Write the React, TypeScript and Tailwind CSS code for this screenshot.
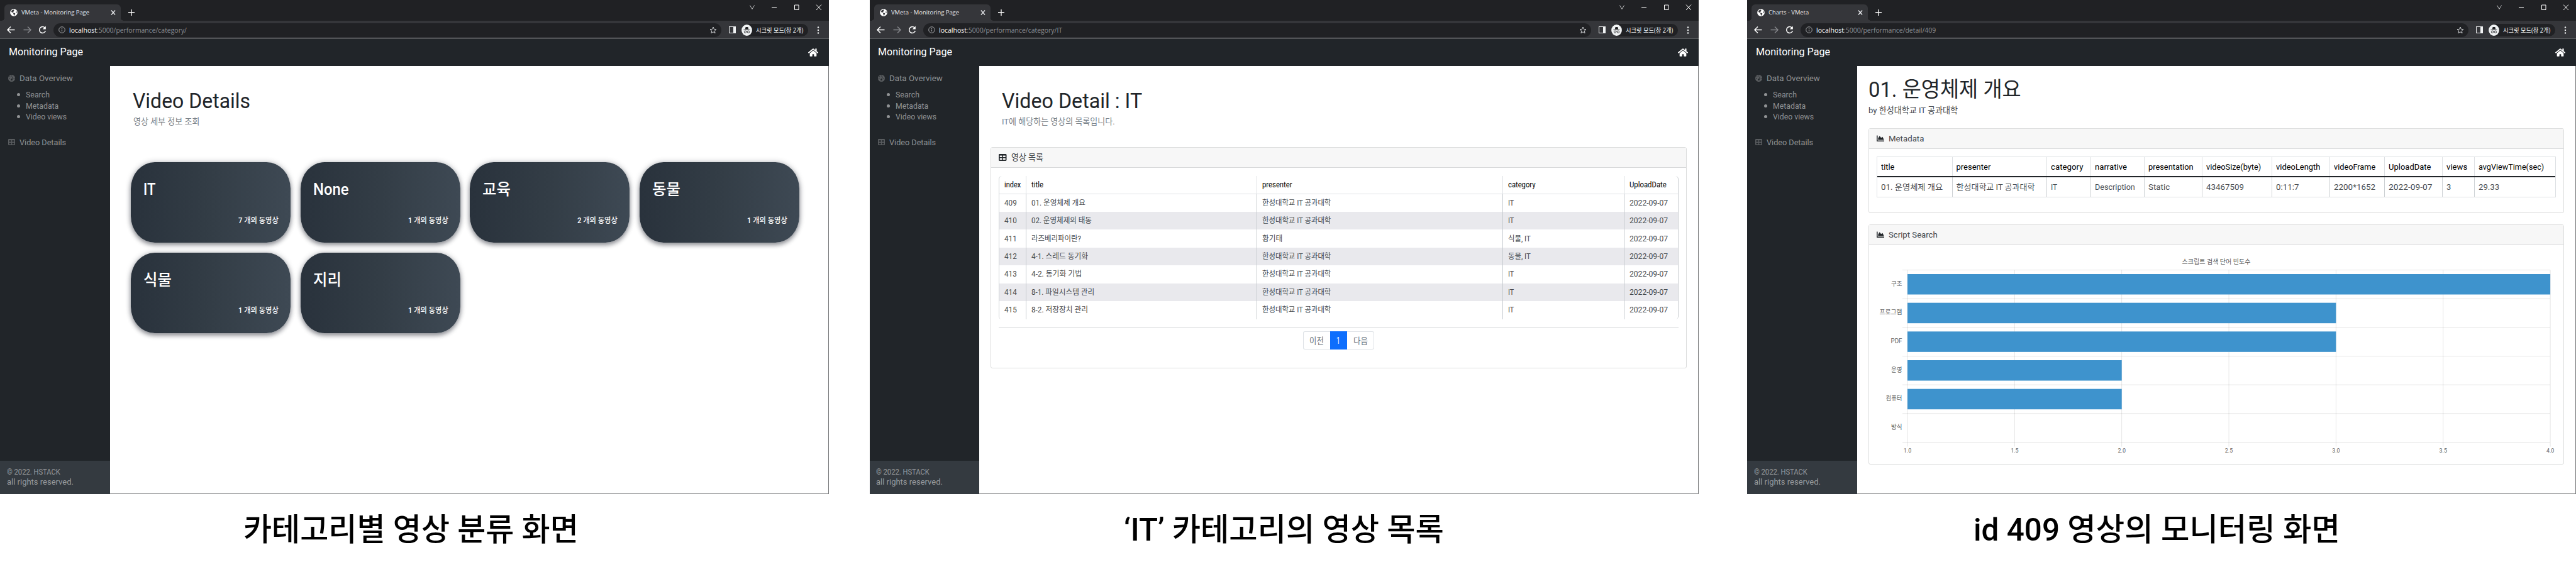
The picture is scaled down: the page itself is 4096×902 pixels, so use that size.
import { useLayoutEffect, useRef, useState } from "react";
import type { ReactNode } from "react";
import { FaChartArea, FaGlobeAmericas, FaHome } from "react-icons/fa";

const FONT = "font-['Roboto','Noto_Sans_CJK_KR',sans-serif]";
const UI_FONT = "font-['Open_Sans','Noto_Sans_CJK_KR',sans-serif]";

/* Condensed label: the text is squeezed or stretched to exactly `w` pixels. */
function Fit({ w, className = "", children }: { w: number; className?: string; children: ReactNode }) {
  const ref = useRef<HTMLSpanElement>(null);
  const [scale, setScale] = useState(1);
  useLayoutEffect(() => {
    if (ref.current) setScale(w / ref.current.offsetWidth);
  }, [w]);
  return (
    <span className={`inline-flex shrink-0 justify-start leading-none ${className}`} style={{ width: w }}>
      <span ref={ref} className="shrink-0 origin-left whitespace-nowrap" style={{ transform: `scaleX(${scale})` }}>
        {children}
      </span>
    </span>
  );
}

function TableIcon({ className }: { className: string }) {
  return (
    <svg viewBox="0 0 16 14" preserveAspectRatio="none" className={className}>
      <path
        fill="currentColor"
        fillRule="evenodd"
        d="M1.8 0h12.4A1.8 1.8 0 0 1 16 1.8v10.4a1.8 1.8 0 0 1-1.8 1.8H1.8A1.8 1.8 0 0 1 0 12.2V1.8A1.8 1.8 0 0 1 1.8 0zM2.2 3.2v3.2h4.8v-3.2zM9 3.2v3.2h4.8v-3.2zM2.2 8.4v3.4h4.8V8.4zM9 8.4v3.4h4.8V8.4z"
      />
    </svg>
  );
}

function GaugeIcon({ className }: { className: string }) {
  return (
    <svg viewBox="0 0 16 16" className={className}>
      <circle cx="8" cy="8" r="8" fill="currentColor" />
      <g fill="#212529">
        <circle cx="8" cy="2.8" r="1" />
        <circle cx="3.9" cy="4.4" r="1" />
        <circle cx="2.6" cy="8.4" r="1" />
        <circle cx="13.400" cy="8.4" r="1" />
        <circle cx="8" cy="11.2" r="2" />
      </g>
      <path d="M8 11.200 11 4" stroke="#212529" strokeWidth="1.300" />
    </svg>
  );
}

function Incognito() {
  return (
    <svg viewBox="0 0 17 18" className="h-[18px] w-[17px] shrink-0">
      <ellipse cx="8.5" cy="9" rx="8.4" ry="9" fill="#f1f3f4" />
      <path d="M5.8 7.5 6.6 4h3.8l.8 3.5z" fill="#202124" />
      <path d="M3.4 8.6h10.2" stroke="#202124" strokeWidth="0.9" />
      <g fill="none" stroke="#202124" strokeWidth="0.8">
        <circle cx="6" cy="11.7" r="1.7" />
        <circle cx="11" cy="11.7" r="1.7" />
        <path d="M7.7 11.400q.8-.5 1.600 0" />
      </g>
    </svg>
  );
}

function Browser({ title, titleW, path, pathW }: { title: string; titleW: number; path: string; pathW: number }) {
  return (
    <div className={UI_FONT}>
      <div className="flex h-[33px] justify-between bg-[#202124] text-white">
        <div className="flex items-end pl-[2px]">
          <span className="size-[5px] bg-[radial-gradient(circle_at_0_0,transparent_5px,#35363a_5px)]" />
          <div className="flex h-[26px] w-[185px] items-center rounded-t-[6px] bg-[#35363a] pl-[9px] text-[#e8eaed]">
            <FaGlobeAmericas className="size-[12px] text-white" />
            <Fit w={titleW} className="ml-[6px] text-[9.500px]">{title}</Fit>
            <svg viewBox="0 0 8 8" className="mr-[8px] ml-auto size-[8px]" stroke="#e8eaed" strokeWidth="1.3">
              <path d="M.9.5 7.1 7.5M7.1.5.9 7.5" />
            </svg>
          </div>
          <span className="size-[5px] bg-[radial-gradient(circle_at_100%_0,transparent_5px,#35363a_5px)]" />
          <svg viewBox="0 0 10 10" className="mb-[8px] ml-[7px] size-[10px]" stroke="#fff" strokeWidth="1.3">
            <path d="M5 0v10M0 5h10" />
          </svg>
        </div>
        <svg viewBox="0 0 125 24" className="mr-[2px] h-[24px] w-[125px]" fill="none" stroke="#fff">
          <path d="m1.500 8.500 3.500 6 3.500-6" strokeWidth="0.9" stroke="#cfd0d2" />
          <path d="M36 11.800h8" />
          <path d="M72.500 8h6.500v7.500h-6.500z" />
          <path d="m107 7.500 8 8.500M115 7.500l-8 8.500" />
        </svg>
      </div>
      <div className="flex h-[29px] items-center border-b border-[#5c5e61] bg-[#35363a] pt-px">
        <svg viewBox="0 0 76 16" className="ml-[8px] h-[16px] w-[76px]" fill="none" stroke="#fff" strokeWidth="1.5">
          <path d="M15.500 7.500H4.500M9 2.500l-5 5 5 5" />
          <path d="M29.500 7.500h11M36 2.500l5 5-5 5" stroke="#85868a" />
          <path d="M63.300 4.300A4.900 5 0 1 0 64.300 9" />
          <path d="M64.800 1.600v4.900h-5z" fill="#fff" stroke="none" />
        </svg>
        <div className="ml-[1px] flex h-[22px] w-[1062px] items-center rounded-full bg-[#202124] pl-[8px]">
          <svg viewBox="0 0 11 11" className="size-[11px]" fill="none" stroke="#a7a9ac" strokeWidth="1">
            <circle cx="5.500" cy="5.500" r="4.800" />
            <path d="M5.500 4.900v3.200M5.500 2.700v1.200" strokeWidth="1.200" />
          </svg>
          <Fit w={44} className="ml-[6px] text-[11px] text-white">localhost</Fit>
          <Fit w={pathW} className="text-[11px] text-[#8d9094]">{path}</Fit>
          <svg viewBox="0 0 12 12" className="mr-[7px] ml-auto size-[12px]" fill="none" stroke="#d0d2d5" strokeWidth="1">
            <path d="m6 1 1.400 3.400 3.600.3-2.700 2.400.8 3.600L6 8.800l-3.100 1.900.8-3.600L1 4.700l3.600-.3z" />
          </svg>
        </div>
        <div className="ml-[12px] h-[11px] w-[11px] border-[1.500px] border-r-[4px] border-[#f1f3f4]" />
        <div className="ml-[9px] flex h-[20px] w-[106px] items-center rounded-full bg-[#202124]">
          <Incognito />
          <Fit w={75} className="ml-[6px] text-[10px] text-[#f1f3f4]">시크릿 모드(창 2개)</Fit>
        </div>
        <svg viewBox="0 0 4 14" className="ml-[14px] h-[14px] w-[4px]" fill="#f1f3f4">
          <circle cx="2" cy="2.500" r="1.200" />
          <circle cx="2" cy="7" r="1.200" />
          <circle cx="2" cy="11.500" r="1.200" />
        </svg>
      </div>
    </div>
  );
}

const bullets = [
  { t: "Search", w: 38 },
  { t: "Metadata", w: 52 },
  { t: "Video views", w: 65 },
];

function Sidebar() {
  return (
    <aside className="flex w-[174.500px] shrink-0 flex-col bg-[#212529] text-[#909294]">
      <div className="mt-[10px] flex h-[18px] items-center pl-[13px]">
        <GaugeIcon className="size-[11px] text-[#595c5f]" />
        <Fit w={85} className="ml-[7px] text-[13px]">Data Overview</Fit>
      </div>
      <ul className="mt-[9px]">
        {bullets.map((b) => (
          <li key={b.t} className="flex h-[17.500px] items-center pl-[27px]">
            <span className="size-[5px] rounded-full bg-[#909294]" />
            <Fit w={b.w} className="ml-[9px] text-[13px]">{b.t}</Fit>
          </li>
        ))}
      </ul>
      <div className="mt-[22.500px] flex h-[18px] items-center pl-[13px]">
        <TableIcon className="h-[10px] w-[11px] text-[#595c5f]" />
        <Fit w={74} className="ml-[7px] text-[13px]">Video Details</Fit>
      </div>
      <div className="mt-auto flex h-[53px] flex-col gap-[4px] bg-[#343a40] pt-[11.500px] pl-[10.500px] text-[#989b9e]">
        <Fit w={85} className="text-[12.500px]">© 2022. HSTACK</Fit>
        <Fit w={106} className="text-[12.500px]">all rights reserved.</Fit>
      </div>
    </aside>
  );
}

type WindowProps = { title: string; titleW: number; path: string; pathW: number; children: ReactNode };

function Window({ children, ...tab }: WindowProps) {
  return (
    <section className="flex h-[786px] w-[1318px] shrink-0 flex-col bg-white">
      <Browser {...tab} />
      <header className="flex h-[43px] items-center justify-between bg-[#212529] pr-[17px] pl-[13.500px] text-white">
        <Fit w={118} className="text-[16.500px]">Monitoring Page</Fit>
        <FaHome className="h-[15px] w-[16px]" />
      </header>
      <div className="flex grow">
        <Sidebar />
        <main className="flex grow flex-col border-r border-b border-[#77787a] pr-[18px] pl-[18px]">{children}</main>
      </div>
    </section>
  );
}

function Category({ name, nameW, count }: { name: string; nameW: number; count: number }) {
  return (
    <div className="flex h-[128px] flex-col rounded-[38px/42px] bg-linear-to-r from-[#29323c] via-[#333d46] to-[#3e4954] pr-[19px] pl-[20px] text-white shadow-[0_4px_7px_rgba(35,38,50,0.42),0_0_10px_rgba(35,38,50,0.28)]">
      <div className="mt-[29px] flex h-[30px] items-center">
        <Fit w={nameW} className="text-[25.500px] font-medium">{name}</Fit>
      </div>
      <div className="mt-[25px] flex h-[18px] items-center justify-end">
        <Fit w={64} className="text-[12.500px] font-medium">{count} 개의 동영상</Fit>
      </div>
    </div>
  );
}

const categories = [
  { name: "IT", nameW: 19, count: 7 },
  { name: "None", nameW: 56, count: 1 },
  { name: "교육", nameW: 45, count: 2 },
  { name: "동물", nameW: 45, count: 1 },
  { name: "식물", nameW: 45, count: 1 },
  { name: "지리", nameW: 45, count: 1 },
];

function CategoryPage() {
  return (
    <>
      <div className="mt-[36px] flex h-[40px] items-center pl-[18px] text-[#212529]">
        <Fit w={187} className="text-[33.500px]">Video Details</Fit>
      </div>
      <div className="mt-[4px] flex h-[18px] items-center pl-[19px] text-[#7b838a]">
        <Fit w={105} className="text-[13.500px]">영상 세부 정보 조회</Fit>
      </div>
      <div className="mt-[55px] ml-[15.500px] grid w-[1063px] grid-cols-4 gap-x-[15.600px] gap-y-[15.500px]">
        {categories.map((c) => (
          <Category key={c.name} {...c} />
        ))}
      </div>
    </>
  );
}

type Cell = [string, number];

const PRES: Cell = ["한성대학교 IT 공과대학", 109];
const rows: { id: string; title: Cell; presenter: Cell; category: Cell }[] = [
  { id: "409", title: ["01. 운영체제 개요", 86], presenter: PRES, category: ["IT", 9] },
  { id: "410", title: ["02. 운영체제의 태동", 96], presenter: PRES, category: ["IT", 9] },
  { id: "411", title: ["라즈베리파이란?", 79], presenter: ["황기태", 32], category: ["식물, IT", 36] },
  { id: "412", title: ["4-1. 스레드 동기화", 90], presenter: PRES, category: ["동물, IT", 36] },
  { id: "413", title: ["4-2. 동기화 기법", 80], presenter: PRES, category: ["IT", 9] },
  { id: "414", title: ["8-1. 파일시스템 관리", 100], presenter: PRES, category: ["IT", 9] },
  { id: "415", title: ["8-2. 저장장치 관리", 90], presenter: PRES, category: ["IT", 9] },
];

const GRID2 = "grid grid-cols-[43px_366.500px_391.500px_192.500px_86px]";
const heads2: Cell[] = [["index", 26.5], ["title", 19], ["presenter", 48], ["category", 44], ["UploadDate", 58.5]];

function ListPage() {
  return (
    <>
      <div className="mt-[36px] flex h-[40px] items-center pl-[18px] text-[#212529]">
        <Fit w={223} className="text-[33.500px]">Video Detail : IT</Fit>
      </div>
      <div className="mt-[4px] flex h-[18px] items-center pl-[18px] text-[#7b838a]">
        <Fit w={180} className="text-[13.500px]">IT에 해당하는 영상의 목록입니다.</Fit>
      </div>
      <div className="mt-[31px] flex h-[352px] flex-col rounded-[3px] border border-[#dcdddd]">
        <div className="flex h-[32px] shrink-0 items-center border-b border-[#d8d9da] bg-[#f7f7f7] pl-[12px] text-[#212529]">
          <TableIcon className="h-[11px] w-[12.500px]" />
          <Fit w={51} className="ml-[7px] text-[13.500px] text-[#3c4044]">영상 목록</Fit>
        </div>
        <div className="mt-[12.500px] ml-[12px] w-[1080.500px] overflow-hidden rounded-[5px] border-x border-[#cbcfd2] text-[12px] text-[#45494d]">
          <div className={`${GRID2} h-[29px] border-b-[1.500px] border-[#dcdfe2] text-black`}>
            {heads2.map(([t, w]) => (
              <div key={t} className="flex items-center border-r border-[#dcdfe2] pl-[8px] last:border-r-0">
                <Fit w={w}>{t}</Fit>
              </div>
            ))}
          </div>
          {rows.map((r) => (
            <div key={r.id} className={`${GRID2} h-[28.450px] even:bg-white odd:bg-[#e9e9ed]`}>
              {([[r.id, 19.5], r.title, r.presenter, r.category, ["2022-09-07", 61.5]] as Cell[]).map(([t, w], i) => (
                <div key={i} className="flex items-center border-r border-[#c4c9cd] pl-[8px] last:border-r-0">
                  <Fit w={w}>{t}</Fit>
                </div>
              ))}
            </div>
          ))}
        </div>
        <div className="mx-[12px] mt-[12px] h-px shrink-0 bg-[#d6d8da]" />
        <div className="mt-[6.500px] flex h-[29px] justify-center text-[14px] text-[#6c757d]">
          <div className="flex w-[43px] items-center justify-center rounded-l-[3px] border border-r-0 border-[#dee2e6]">
            <Fit w={23}>이전</Fit>
          </div>
          <div className="flex w-[27.500px] items-center justify-center bg-[#0d6efd] text-white">
            <Fit w={6}>1</Fit>
          </div>
          <div className="flex w-[43px] items-center justify-center rounded-r-[3px] border border-l-0 border-[#dee2e6]">
            <Fit w={23}>다음</Fit>
          </div>
        </div>
      </div>
    </>
  );
}

const meta: { head: Cell; value: Cell }[] = [
  { head: ["title", 21.5], value: ["01. 운영체제 개요", 98] },
  { head: ["presenter", 55], value: ["한성대학교 IT 공과대학", 125] },
  { head: ["category", 51], value: ["IT", 10] },
  { head: ["narrative", 50.5], value: ["Description", 64] },
  { head: ["presentation", 72], value: ["Static", 34] },
  { head: ["videoSize(byte)", 87.5], value: ["43467509", 59.5] },
  { head: ["videoLength", 70.5], value: ["0:11:7", 37] },
  { head: ["videoFrame", 66.5], value: ["2200*1652", 66] },
  { head: ["UploadDate", 67], value: ["2022-09-07", 70] },
  { head: ["views", 33.5], value: ["3", 7] },
  { head: ["avgViewTime(sec)", 104], value: ["29.33", 33.5] },
];
const GRID3 =
  "grid grid-cols-[120px_150px_70px_85px_92px_111.500px_92px_87px_92px_51px_129px]";

function PanelHead({ title, w }: { title: string; w: number }) {
  return (
    <div className="flex h-[32px] shrink-0 items-center border-b border-[#d8d9da] bg-[#f7f7f7] pl-[12px] text-[#212529]">
      <FaChartArea className="h-[12.500px] w-[12.500px]" />
      <Fit w={w} className="ml-[6.500px] text-[13.500px] text-[#45494d]">{title}</Fit>
    </div>
  );
}

const bars = [
  { t: "구조", w: 17.5, v: 4 },
  { t: "프로그램", w: 36, v: 3 },
  { t: "PDF", w: 18, v: 3 },
  { t: "운영", w: 17.5, v: 2 },
  { t: "컴퓨터", w: 26, v: 2 },
  { t: "방식", w: 17.5, v: 1 },
];
const X0 = 61;
const Y0 = 39.5;
const STEP = 45.67;
const UNIT = 340.7;

function Chart() {
  return (
    <svg viewBox="0 0 1104 348" className="h-[348px] w-[1104px] shrink-0" fill="#666">
      <g stroke="#000" strokeOpacity="0.1">
        {[0, 1, 2, 3, 4, 5, 6].map((i) => (
          <path key={i} d={`M${X0 - 8} ${Y0 + i * STEP}h${UNIT * 3 + 8}`} />
        ))}
        {[0, 1, 2, 3, 4, 5, 6].map((i) => (
          <path key={i} d={`M${X0 + (i * UNIT) / 2} ${Y0}v${STEP * 6 + 7}`} />
        ))}
      </g>
      {bars.map((b, i) => (
        <rect key={b.t} x={X0} y={Y0 + i * STEP + 6.5} width={(b.v - 1) * UNIT} height="32.5" fill="#3e93cd" />
      ))}
      {bars.map((b, i) => (
        <text key={b.t} x={X0 - 8.5 - b.w} y={Y0 + i * STEP + 25} fontSize="10" textLength={b.w} lengthAdjust="spacingAndGlyphs">
          {b.t}
        </text>
      ))}
      {["1.0", "1.5", "2.0", "2.5", "3.0", "3.5", "4.0"].map((t, i) => (
        <text key={t} x={X0 - 6.2 + (i * UNIT) / 2} y={Y0 + 290} fontSize="9.5" textLength="12.4" lengthAdjust="spacingAndGlyphs">
          {t}
        </text>
      ))}
      <text x="497.5" y="29.5" fontSize="10" textLength="109" lengthAdjust="spacingAndGlyphs" fill="#5a5a5a">
        스크립트 검색 단어 빈도수
      </text>
    </svg>
  );
}

function DetailPage() {
  return (
    <>
      <div className="mt-[17px] flex h-[40px] items-center text-[#212529]">
        <Fit w={243} className="text-[34px]">01. 운영체제 개요</Fit>
      </div>
      <div className="mt-[5px] flex h-[18px] items-center text-[#45494d]">
        <Fit w={142} className="text-[13.500px]">by 한성대학교 IT 공과대학</Fit>
      </div>
      <div className="mt-[19px] flex h-[135px] flex-col rounded-[3px] border border-[#dcdddd]">
        <PanelHead title="Metadata" w={56} />
        <div className="mt-[12px] ml-[12px] w-[1080.500px] border border-[#dde0e3] text-[13px] text-[#4c5054]">
          <div className={`${GRID3} h-[32px] border-b-2 border-[#212529] text-black`}>
            {meta.map(({ head: [t, w] }) => (
              <div key={t} className="flex items-center border-r border-[#dde0e3] pl-[6px] last:border-r-0">
                <Fit w={w}>{t}</Fit>
              </div>
            ))}
          </div>
          <div className={`${GRID3} h-[31px]`}>
            {meta.map(({ head, value: [t, w] }) => (
              <div key={head[0]} className="flex items-center border-r border-[#cdd1d4] pl-[6px] last:border-r-0">
                <Fit w={w}>{t}</Fit>
              </div>
            ))}
          </div>
        </div>
      </div>
      <div className="mt-[18px] flex h-[382px] flex-col rounded-[3px] border border-[#dcdddd]">
        <PanelHead title="Script Search" w={78} />
        <Chart />
      </div>
    </>
  );
}

export default function App() {
  return (
    <div className={`h-[902px] w-[4096px] overflow-hidden bg-white ${FONT}`}>
      <div className="flex justify-between">
        <Window title="VMeta - Monitoring Page" titleW={108} path=":5000/performance/category/" pathW={143}>
          <CategoryPage />
        </Window>
        <div className="-ml-[13px]">
          <Window title="VMeta - Monitoring Page" titleW={108} path=":5000/performance/category/IT" pathW={152}>
            <ListPage />
          </Window>
        </div>
        <Window title="Charts - VMeta" titleW={64} path=":5000/performance/detail/409" pathW={146}>
          <DetailPage />
        </Window>
      </div>
      <div className="flex h-[116px] items-center pl-[387px] text-[49.500px] font-medium text-black">
        <Fit w={533}>카테고리별 영상 분류 화면</Fit>
        <Fit w={509} className="ml-[867px]">‘IT’ 카테고리의 영상 목록</Fit>
        <Fit w={583} className="ml-[842px]">id 409 영상의 모니터링 화면</Fit>
      </div>
    </div>
  );
}
